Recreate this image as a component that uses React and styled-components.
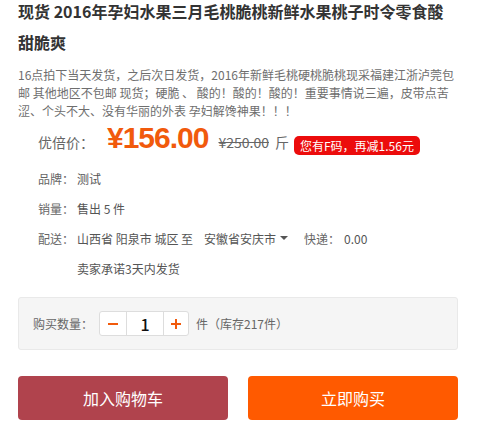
import React from 'react'
import styled, { createGlobalStyle } from 'styled-components'

const GlobalStyle = createGlobalStyle`
  body {
    margin: 0;
    background: #fff;
    font-family: "Noto Sans CJK SC", "Noto Sans", sans-serif;
  }
`

const Page = styled.div`
  width: 440px;
  padding: 0 20px 0 18px;
  overflow: hidden;
`

const Title = styled.h1`
  margin: -4px 0 0;
  font-size: 16px;
  font-weight: bold;
  line-height: 31px;
  color: #333;
`

const Desc = styled.p`
  margin: 8px 0 0;
  font-size: 12px;
  line-height: 18px;
  color: #6e6e6e;
`

const Info = styled.div`
  margin-top: 7px;
  padding-left: 20px;
`

const PriceRow = styled.div`
  display: flex;
  align-items: baseline;
  height: 36px;
  line-height: 22px;
`

const PriceLabel = styled.span`
  font-size: 14px;
  color: #666;
  margin-right: 13px;
`

const Price = styled.span`
  font-family: "Liberation Sans", Arial, sans-serif;
  font-size: 30px;
  font-weight: bold;
  letter-spacing: -1px;
  color: #f15a0c;
`

const OldPrice = styled.span`
  margin-left: 10px;
  font-size: 14px;
  color: #666;
  text-decoration: line-through;
`

const Unit = styled.span`
  margin-left: 6px;
  font-size: 14px;
  color: #666;
`

const Badge = styled.span`
  align-self: center;
  margin-left: 5px;
  padding: 0 6px;
  height: 19px;
  line-height: 19px;
  border-radius: 5px;
  background: #ec0c0c;
  color: #fff;
  font-size: 12px;
`

const Row = styled.div`
  display: flex;
  align-items: center;
  height: 30px;
  font-size: 12px;
  color: #666;
  padding-left: ${p => (p.$indent ? '39px' : '0')};
`

const Label = styled.span`
  width: ${p => (p.$auto ? 'auto' : '39px')};
  margin-left: ${p => p.$gap || 0}px;
  flex: none;
`

const Value = styled.span`
  color: #555;
  margin-left: ${p => p.$gap || 0}px;
  display: inline-flex;
  align-items: center;
`

const Caret = styled.span`
  margin-left: 4px;
  width: 0;
  height: 0;
  border-left: 4px solid transparent;
  border-right: 4px solid transparent;
  border-top: 4px solid #555;
`

const BuyBox = styled.div`
  margin-top: 14px;
  height: 51px;
  display: flex;
  align-items: center;
  padding-left: 14px;
  background: #f5f5f5;
  border: 1px solid #e9e9e9;
  border-radius: 3px;
  font-size: 12px;
  color: #666;
`

const Stepper = styled.div`
  display: flex;
  height: 23px;
  margin: 0 7px 0 6px;
  border: 1px solid #ddd;
  border-radius: 3px;
  background: #fff;
`

const StepBtn = styled.span`
  width: ${p => p.$w}px;
  display: flex;
  align-items: center;
  justify-content: center;
`

const Qty = styled.span`
  width: 36px;
  border-left: 1px solid #ddd;
  border-right: 1px solid #ddd;
  display: flex;
  align-items: center;
  justify-content: center;
  font-size: 16px;
  font-weight: 500;
  color: #111;
`

const Actions = styled.div`
  margin-top: 26px;
  display: flex;
  gap: 20px;
`

const Button = styled.button`
  flex: 1;
  height: 44px;
  border: none;
  border-radius: 4px;
  background: ${p => p.$bg};
  color: #fff;
  font-family: inherit;
  font-size: 16px;
`

const Minus = () => (
  <svg width="10" height="10" viewBox="0 0 10 10">
    <path d="M0 5H10" stroke="#f15a0c" strokeWidth="2" />
  </svg>
)

const Plus = () => (
  <svg width="10" height="10" viewBox="0 0 10 10">
    <path d="M0 5H10M5 0V10" stroke="#f15a0c" strokeWidth="2" />
  </svg>
)

const App = () => {
  return (
    <Page>
      <GlobalStyle />
      <Title>现货 2016年孕妇水果三月毛桃脆桃新鲜水果桃子时令零食酸甜脆爽</Title>
      <Desc>
        16点拍下当天发货，之后次日发货，2016年新鲜毛桃硬桃脆桃现采福建江浙泸莞包邮 其他地区不包邮 现货；硬脆 、 酸的！酸的！酸的！重要事情说三遍，皮带点苦涩、个头不大、没有华丽的外表 孕妇解馋神果！！！
      </Desc>
      <Info>
        <PriceRow>
          <PriceLabel>优倍价：</PriceLabel>
          <Price>¥156.00</Price>
          <OldPrice>¥250.00</OldPrice>
          <Unit>斤</Unit>
          <Badge>您有F码，再减1.56元</Badge>
        </PriceRow>
        <Row>
          <Label>品牌：</Label>
          <Value>测试</Value>
        </Row>
        <Row>
          <Label>销量：</Label>
          <Value>售出 5 件</Value>
        </Row>
        <Row>
          <Label>配送：</Label>
          <Value>山西省 阳泉市 城区 至</Value>
          <Value $gap={11}>安徽省安庆市<Caret /></Value>
          <Label $auto $gap={16}>快递：</Label>
          <Value $gap={4}>0.00</Value>
        </Row>
        <Row $indent>
          <Value>卖家承诺3天内发货</Value>
        </Row>
      </Info>
      <BuyBox>
        购买数量：
        <Stepper>
          <StepBtn $w={26}><Minus /></StepBtn>
          <Qty>1</Qty>
          <StepBtn $w={24}><Plus /></StepBtn>
        </Stepper>
        件（库存217件）
      </BuyBox>
      <Actions>
        <Button $bg="#b0434d">加入购物车</Button>
        <Button $bg="#ff5a00">立即购买</Button>
      </Actions>
    </Page>
  )
}

export default App
